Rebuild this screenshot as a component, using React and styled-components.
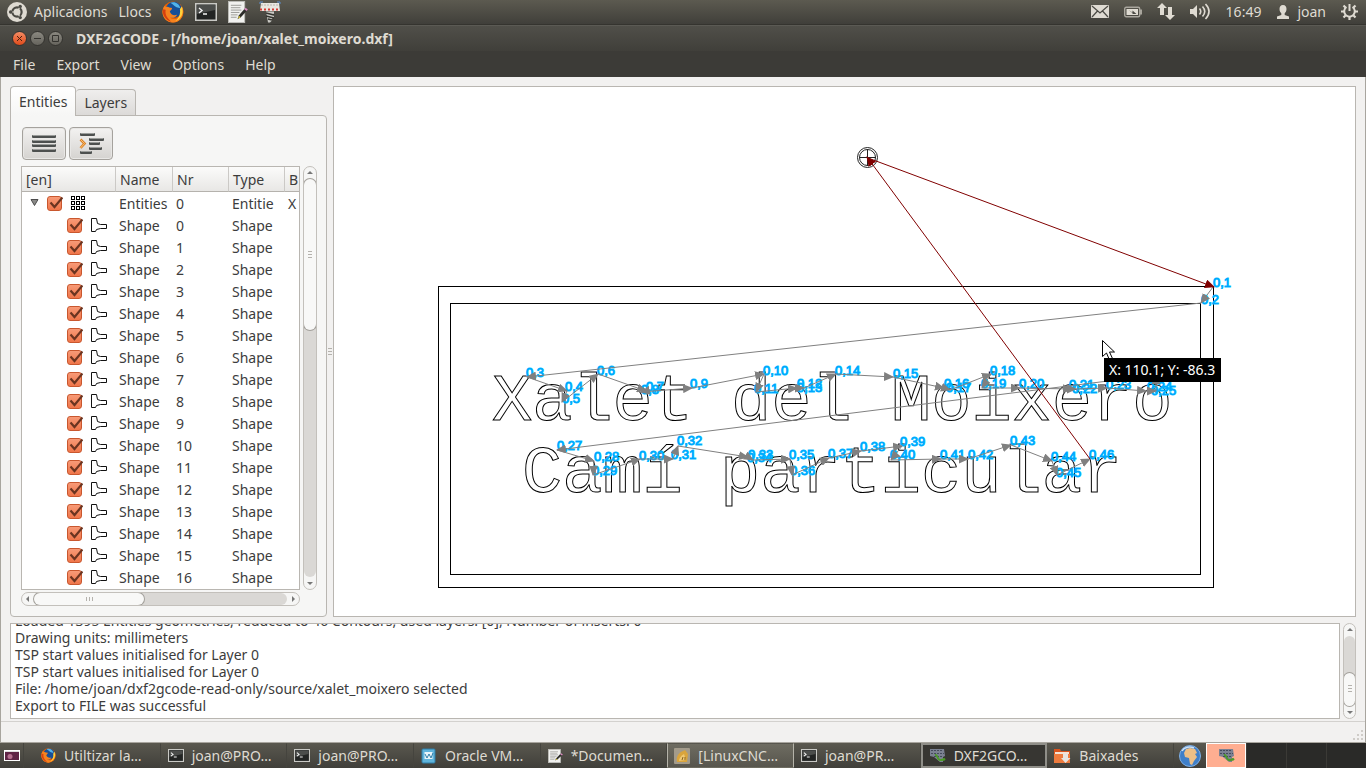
import { useState } from "react";
import styled, { createGlobalStyle, css } from "styled-components";

const color = {
  bar: "#3c3b37",
  barText: "#dfdbd2",
  window: "#f2f1f0",
  pane: "#f6f6f5",
  border: "#b9b6b1",
  text: "#3c3c3c",
  orange: "#f0764a",
  route: "#808080",
  rapid: "#800000",
};

const GlobalStyle = createGlobalStyle`
  * {
    box-sizing: border-box;
  }
  body {
    margin: 0;
    font-family: "Noto Sans", "Open Sans", sans-serif;
    font-size: 14px;
    line-height: 17px;
    color: ${color.text};
    background: ${color.window};
  }
  button,
  input {
    font: inherit;
    color: inherit;
    margin: 0;
  }
`;

const Desktop = styled.div`
  height: 100vh;
  min-height: 480px;
  display: flex;
  flex-direction: column;
  overflow: hidden;
`;

// ---------- top panel ----------
const TopPanel = styled.header`
  height: 25px;
  flex: none;
  display: flex;
  align-items: center;
  justify-content: space-between;
  padding: 0 8px 1px 7px;
  color: ${color.barText};
  background: linear-gradient(#5c5a50, #403f3a);
  border-bottom: 1px solid #35342f;
`;
const PanelGroup = styled.div`
  display: flex;
  align-items: center;
  gap: ${(p) => p.$gap}px;
`;
const PanelButton = styled.button`
  display: flex;
  align-items: center;
  gap: 7px;
  padding: 0;
  border: 0;
  background: none;
  color: inherit;
  white-space: nowrap;
`;

const UbuntuIcon = () => (
  <svg width="20" height="20" viewBox="0 0 20 20">
    <circle cx="10" cy="10" r="10" fill="#dfdbd2" />
    <circle cx="10" cy="10" r="4.6" fill="none" stroke="#4b4a44" strokeWidth="2.2" />
    <g stroke="#dfdbd2" strokeWidth="1.2">
      <path d="M10 10h-8M10 10l4 -7M10 10l4 7" />
    </g>
    <circle cx="10" cy="10" r="3" fill="#dfdbd2" />
    <g fill="#4b4a44">
      <circle cx="3.6" cy="10" r="1.7" />
      <circle cx="13.2" cy="4.4" r="1.7" />
      <circle cx="13.2" cy="15.6" r="1.7" />
    </g>
  </svg>
);

const FirefoxIcon = ({ size }) => (
  <svg width={size} height={size} viewBox="0 0 24 24">
    <circle cx="12" cy="12" r="11.5" fill="#e66000" />
    <circle cx="13" cy="9.5" r="8.8" fill="#174f96" />
    <path d="M9 2c5-2 10 1 11 6l-3-1c-3 0-4-3-8-5z" fill="#53b4e8" />
    <path
      d="M22 6c3 8-1 17-10 17.500C5 23.500 0 18 .600 11 1 8 2 6 3.500 4.500l.500 2c2-.500 3 0 4 .500l3 .500c0 2-2 2.500-2.500 4 1 3 4 5 8 3.500-1 3-5 4-8 3 5 4 13 1 13.500-7z"
      fill="#f5821f"
    />
    <path d="M21.500 6c3 7-1 14-7 16 4-3 6-8 5-13z" fill="#ffd23c" />
    <path d="M1 9c-1 6 3 12 9 13.500-4-4-7-7-6-13z" fill="#d8400f" />
  </svg>
);

const TerminalIcon = ({ width, height }) => (
  <svg width={width} height={height} viewBox="0 0 22 18" preserveAspectRatio="none">
    <rect width="22" height="18" fill="#c9c9c5" />
    <rect x="1.500" y="1.500" width="19" height="15" fill="#222423" />
    <path d="M2 2h18v5L2 11z" fill="#4b4d4b" />
    <path d="M4 5l3 2.500L4 10M8 11h4" fill="none" stroke="#f4f4f4" strokeWidth="1.400" />
  </svg>
);

const EditorIcon = ({ width, height }) => (
  <svg width={width} height={height} viewBox="0 0 21 23" preserveAspectRatio="none">
    <rect x=".500" y=".500" width="17" height="22" fill="#f1f1ef" stroke="#bdbdb8" />
    <path
      d="M3 4.500h11M3 7h10M3 9.500h11M3 12h9M3 14.500h7M3 17h6"
      stroke="#9a9a96"
    />
    <path d="M10 19l1.500-4 6-7 2.500 2-6.500 7z" fill="#2d2d2a" />
    <path d="M10.500 18.500l1-3 1.700 1.500z" fill="#e8d33f" />
    <path d="M17 8.500l1.500-1.500 2.300 2-1.300 1.500z" fill="#d98bc0" />
  </svg>
);

const MillIcon = () => (
  <svg width="22" height="22" viewBox="0 0 22 22">
    <path d="M1 3V1h3M21 3V1h-3" fill="none" stroke="#5d8fd0" />
    <path d="M2 2h18l1 8H1z" fill="#e8e6e0" />
    <path d="M2 4h18" stroke="#b9b6b0" strokeDasharray="2 1" />
    <path d="M1 8.500h20" stroke="#d33b34" strokeWidth="2" strokeDasharray="2 2" />
    <path d="M7 10.500h8v2l-1 1 1 1v2l-2 1v2l-2 2h-2z" fill="#c9c8c3" />
    <path d="M7 12l8 2M7 15l8 2M9 18l4 1" stroke="#353530" strokeWidth="1.300" />
  </svg>
);

const MailIcon = () => (
  <svg width="18" height="13" viewBox="0 0 18 13">
    <rect width="18" height="13" rx="1" fill="#dfdbd2" />
    <path
      d="M1 1l8 7 8-7M1 12l5.500-6M17 12l-5.500-6"
      fill="none"
      stroke="#4b4a44"
      strokeWidth="1.200"
    />
  </svg>
);

const BatteryIcon = () => (
  <svg width="18" height="12" viewBox="0 0 18 12">
    <rect x=".700" y="1.200" width="15" height="9.600" rx="1.500" fill="none" stroke="#a9a69d" strokeWidth="1.400" />
    <rect x="2.500" y="3" width="11.500" height="6" fill="#dfdbd2" />
    <rect x="16" y="3.500" width="2" height="5" fill="#a9a69d" />
    <path d="M4.500 4l4 2.500V4.500l4 3.500H8.500V7z" fill="#4b4a44" />
  </svg>
);

const NetworkIcon = () => (
  <svg width="18" height="17" viewBox="0 0 18 17" fill="#dfdbd2">
    <path d="M5 0l5 5H7v7H3V5H0z" />
    <path d="M13 17l5-5h-3V4h-4v8H8z" />
  </svg>
);

const VolumeIcon = () => (
  <svg width="21" height="17" viewBox="0 0 21 17">
    <path d="M0 6h3l4-4v13l-4-4H0z" fill="#dfdbd2" />
    <path
      d="M9.500 5.500q2.500 3 0 6M12.500 3.500q4.500 5 0 10M15.500 1q7 7.500 0 15"
      fill="none"
      stroke="#dfdbd2"
      strokeWidth="1.600"
    />
  </svg>
);

const UserIcon = () => (
  <svg width="14" height="14" viewBox="0 0 14 14" fill="#dfdbd2">
    <path d="M7 0c2.500 0 3.500 1.700 3.500 4S9.500 7.500 8.700 8.300V10l4.300 1.500V14H1v-2.500L5.300 10V8.300C4.500 7.500 3.500 6.300 3.500 4S4.500 0 7 0z" />
  </svg>
);

const GearIcon = () => (
  <svg width="17" height="17" viewBox="0 0 17 17">
    <g stroke="#dfdbd2" fill="none">
      <path d="M5.500 4a5.300 5.300 0 1 0 6 0" strokeWidth="2" />
      <path d="M8.500 1v7" strokeWidth="2" />
      <path
        d="M0 8.500h3M14 8.500h3M8.500 14v3M2.500 2.500l2 2M14.500 2.500l-2 2M2.500 14.500l2-2M14.500 14.500l-2-2"
        strokeWidth="2.200"
      />
    </g>
  </svg>
);

// ---------- window frame ----------
const TitleBar = styled.div`
  height: 26px;
  flex: none;
  display: flex;
  align-items: center;
  gap: 3px;
  padding: 0 12px 1px;
  color: ${color.barText};
  background: linear-gradient(#504f49, #403f3a);
  border-top: 1px solid #5b5a54;
`;
const WindowButton = styled.button`
  width: 15px;
  height: 15px;
  padding: 0;
  display: grid;
  place-items: center;
  border: 1px solid #34332f;
  border-radius: 50%;
  background: ${(p) =>
    p.$close
      ? "linear-gradient(#f58b63, #df4b1b)"
      : "linear-gradient(#8a8880, #66645d)"};
`;
const WindowTitle = styled.h1`
  margin: 0 0 0 10px;
  font-size: 14px;
  font-weight: 700;
`;
const MenuBar = styled.nav`
  height: 26px;
  flex: none;
  display: flex;
  align-items: center;
  gap: 21px;
  padding: 0 13px;
  color: ${color.barText};
  background: ${color.bar};
`;
const Workspace = styled.main`
  flex: 1;
  min-height: 0;
  display: flex;
  flex-direction: column;
  gap: 6px;
  padding: 9px 9px 2px 9px;
  border: solid #a8a59e;
  border-width: 0 1px;
`;
const Split = styled.div`
  flex: 1;
  min-height: 0;
  display: flex;
`;
const Handle = styled.div`
  width: 6px;
  display: grid;
  place-items: center;
`;

const Grip = () => (
  <svg width="4" height="8" viewBox="0 0 4 8" stroke="#b5b2ad">
    <path d="M0 .5h4M0 3.500h4M0 6.500h4" />
  </svg>
);

// ---------- side panel ----------
const Side = styled.section`
  width: 317px;
  flex: none;
  display: flex;
  flex-direction: column;
`;
const Tabs = styled.div`
  height: 30px;
  flex: none;
  display: flex;
  align-items: flex-end;
  margin-bottom: -1px;
  z-index: 1;
`;
const Tab = styled.button`
  height: ${(p) => (p.$active ? 30 : 26)}px;
  margin-bottom: ${(p) => (p.$active ? 0 : 1)}px;
  padding: 0 8px;
  border: 1px solid ${color.border};
  border-bottom: 0;
  border-radius: 4px 4px 0 0;
  background: ${(p) =>
    p.$active
      ? `linear-gradient(#ffffff, ${color.pane})`
      : "linear-gradient(#efeeed, #dcdad8)"};
  & + & {
    border-left: 0;
  }
`;
const TabPane = styled.div`
  flex: 1;
  min-height: 0;
  display: flex;
  flex-direction: column;
  gap: 6px;
  padding: 11px 9px 10px 10px;
  border: 1px solid ${color.border};
  border-radius: 0 4px 4px 4px;
  background: ${color.pane};
`;
const Tools = styled.div`
  display: flex;
  gap: 3px;
  padding-left: 1px;
`;
const ToolButton = styled.button`
  width: 44px;
  height: 33px;
  padding: 0;
  display: grid;
  place-items: center;
  border: 1px solid #a5a29d;
  border-radius: 4px;
  background: linear-gradient(#f3f2f1, #d5d3d0);
  box-shadow: inset 0 0 0 1px #e8e7e5;
`;
const TreeArea = styled.div`
  flex: 1;
  min-height: 0;
  display: grid;
  grid-template-columns: 1fr 14px;
  grid-template-rows: 1fr 14px;
  gap: 2px 3px;
`;
const TreeFrame = styled.div`
  min-height: 0;
  overflow: hidden;
  border: 1px solid ${color.border};
  background: #fff;
`;
const Tree = styled.table`
  width: 380px;
  table-layout: fixed;
  border-collapse: separate;
  border-spacing: 0;
  th,
  td {
    padding: 0 0 0 3px;
    font-weight: 400;
    text-align: left;
    white-space: nowrap;
    overflow: hidden;
  }
  th {
    height: 25px;
    padding-left: 4px;
    border-right: 1px solid #cbc9c6;
    border-bottom: 1px solid #b5b2ad;
    background: linear-gradient(#fbfbfa, #e8e7e5);
  }
  td {
    height: 22px;
  }
`;
const Node = styled.div`
  display: flex;
  align-items: center;
  gap: 8px;
  padding-left: ${(p) => (p.$level ? 42 : 5)}px;
`;
const CheckWrap = styled.label`
  position: relative;
  display: block;
  width: 16px;
  height: 15px;
  svg {
    position: absolute;
    inset: 0;
    pointer-events: none;
  }
`;
const CheckInput = styled.input`
  appearance: none;
  display: block;
  width: 15px;
  height: 15px;
  border: 1px solid #c9572e;
  border-radius: 3px;
  background: linear-gradient(#f79a77, ${color.orange});
  &:not(:checked) {
    border-color: #aaa;
    background: #fff;
  }
`;

const Check = ({ label }) => {
  const [checked, setChecked] = useState(true);
  return (
    <CheckWrap>
      <CheckInput
        type="checkbox"
        aria-label={label}
        checked={checked}
        onChange={() => setChecked((prev) => !prev)}
      />
      {checked && (
        <svg width="16" height="15" viewBox="0 0 16 15">
          <path d="M3.500 6.500l4 4.500 8-9.500" fill="none" stroke="#6b3420" strokeWidth="2.200" />
        </svg>
      )}
    </CheckWrap>
  );
};

const GridIcon = () => (
  <svg width="15" height="15" viewBox="0 0 15 15" fill="#fff" stroke="#000" shapeRendering="crispEdges">
    {[0, 5, 10].map((y) =>
      [0, 5, 10].map((x) => (
        <rect key={`${x}-${y}`} x={x + 0.5} y={y + 0.5} width="3" height="3" />
      ))
    )}
  </svg>
);
const ShapeIcon = () => (
  <svg width="16" height="15" viewBox="0 0 16 15" fill="none" stroke="#111">
    <path d="M.500 .500h5l1 5 3 1h6v4h-6l-4 1-1 2h-4z" />
  </svg>
);
const Expander = () => (
  <svg width="9" height="8" viewBox="0 0 9 8">
    <path d="M1 .500h7L4.500 6.500z" fill="#8a8a88" stroke="#4c4c4c" />
  </svg>
);
const CollapseIcon = () => (
  <svg width="24" height="19" viewBox="0 0 24 19">
    {[2, 7, 11, 16].map((y) => (
      <g key={y}>
        <rect x="0" y={y - 1} width="24" height="3" rx="1" fill="#4d504f" />
        <path d={`M1 ${y - 0.500}h22`} stroke="#9b9d9b" />
      </g>
    ))}
  </svg>
);
const ExpandIcon = () => (
  <svg width="25" height="22" viewBox="0 0 25 22">
    {[
      [1, 0, 15],
      [10, 5, 15],
      [10, 9, 11],
      [10, 14, 13],
      [1, 18, 12],
    ].map(([x, y, w]) => (
      <g key={y}>
        <rect x={x} y={y} width={w} height="3" rx="1" fill="#4d504f" />
        <path d={`M${x + 1} ${y + 0.500}h${w - 2}`} stroke="#9b9d9b" />
      </g>
    ))}
    <path d="M1.500 6.500l4 4-4 4.500" fill="none" stroke="#d9822b" strokeWidth="2.600" />
    <path d="M1.500 6.500l4 4-4 4.500" fill="none" stroke="#fbc06c" />
  </svg>
);

// ---------- scroll bars ----------
const Bar = styled.div`
  display: flex;
  flex-direction: ${(p) => (p.$vertical ? "column" : "row")};
  border: 1px solid #c3c0bb;
  border-radius: 7px;
  background: #f6f6f5;
  overflow: hidden;
`;
const Arrow = styled.button`
  flex: 0 0 12px;
  padding: 0;
  border: 0;
  background: none;
  display: grid;
  place-items: center;
`;
const Trough = styled.div`
  flex: 1;
  display: flex;
  flex-direction: inherit;
  border-radius: 6px;
  background: #dad8d5;
`;
const Space = styled.div`
  flex: ${(p) => p.$grow} 0 0;
`;
const Thumb = styled.div`
  flex: ${(p) => p.$grow} 0 0;
  display: grid;
  place-items: center;
  border-radius: 6px;
  background: #f8f8f7;
  box-shadow: 0 0 0 1px #a3a09b;
  ${(p) =>
    !p.$vertical &&
    css`
      svg {
        transform: rotate(90deg);
      }
    `}
`;

const arrowPaths = {
  up: "M1 5l3-3 3 3z",
  down: "M1 3l3 3 3-3z",
  left: "M5 1L2 4l3 3z",
  right: "M3 1l3 3-3 3z",
};
const ScrollArrow = ({ dir }) => (
  <Arrow aria-label={dir}>
    <svg width="8" height="8" viewBox="0 0 8 8">
      <path d={arrowPaths[dir]} fill="#777" />
    </svg>
  </Arrow>
);
const ScrollBar = ({ vertical, before, size, after }) => (
  <Bar $vertical={vertical}>
    <ScrollArrow dir={vertical ? "up" : "left"} />
    <Trough>
      <Space $grow={before} />
      <Thumb $grow={size} $vertical={vertical}>
        <Grip />
      </Thumb>
      <Space $grow={after} />
    </Trough>
    <ScrollArrow dir={vertical ? "down" : "right"} />
  </Bar>
);

const shapes = Array.from({ length: 17 }, (_, i) => i);

const EntityTree = () => (
  <Tree>
    <colgroup>
      <col style={{ width: 94 }} />
      <col style={{ width: 57 }} />
      <col style={{ width: 56 }} />
      <col style={{ width: 56 }} />
      <col />
    </colgroup>
    <thead>
      <tr>
        <th>[en]</th>
        <th>Name</th>
        <th>Nr</th>
        <th>Type</th>
        <th>B</th>
      </tr>
    </thead>
    <tbody>
      <tr>
        <td>
          <Node $level={0}>
            <Expander />
            <Check label="Entities 0" />
            <GridIcon />
          </Node>
        </td>
        <td>Entities</td>
        <td>0</td>
        <td>Entitie</td>
        <td>X</td>
      </tr>
      {shapes.map((nr) => (
        <tr key={nr}>
          <td>
            <Node $level={1}>
              <Check label={`Shape ${nr}`} />
              <ShapeIcon />
            </Node>
          </td>
          <td>Shape</td>
          <td>{nr}</td>
          <td>Shape</td>
          <td></td>
        </tr>
      ))}
    </tbody>
  </Tree>
);

// ---------- drawing ----------
const Canvas = styled.section`
  position: relative;
  flex: 1;
  min-width: 0;
  overflow: hidden;
  border: 1px solid ${color.border};
  background: #fff;
`;
const Drawing = styled.svg`
  display: block;
  width: 100%;
  height: 100%;
`;
const Engraving = styled.text`
  font-family: "Liberation Mono", monospace;
  font-size: 67px;
  fill: none;
  stroke: #000;
`;
const RouteLabel = styled.text`
  font-family: "Liberation Sans", sans-serif;
  font-size: 13px;
  fill: #00a4ff;
  stroke: #00c0ff;
  stroke-width: 1px;
  paint-order: stroke;
`;
const Coordinates = styled.output`
  position: absolute;
  left: 770px;
  top: 271px;
  padding: 3px 6px 4px 5px;
  color: #fff;
  background: #000;
  white-space: nowrap;
`;

// [label, arrow tip x, y, text x, baseline]
const stops = [
  ["0,1", 1213, 287, 1213, 287],
  ["0,2", 1201, 303, 1201, 304],
  ["0,3", 527, 377, 526, 377],
  ["0,4", 567, 391, 565, 391],
  ["0,5", 562, 402, 562, 403],
  ["0,6", 598, 374, 597, 375],
  ["0,7", 646, 391, 646, 391],
  ["0,8", 641, 392, 641, 394],
  ["0,9", 692, 388, 690, 388],
  ["0,10", 764, 374, 763, 375],
  ["0,11", 756, 392, 754, 393],
  ["0,12", 797, 388, 797, 388],
  ["0,13", 804, 388, 797, 392],
  ["0,14", 836, 374, 835, 375],
  ["0,15", 893, 377, 893, 378],
  ["0,16", 944, 388, 944, 388],
  ["0,17", 950, 390, 946, 392],
  ["0,18", 991, 374, 990, 375],
  ["0,19", 982, 388, 981, 388],
  ["0,20", 1020, 388, 1019, 388],
  ["0,21", 1072, 389, 1069, 389],
  ["0,22", 1076, 389, 1072, 393],
  ["0,23", 1107, 388, 1106, 389],
  ["0,24", 1146, 391, 1147, 391],
  ["0,25", 1156, 391, 1151, 395],
  ["0,26", 1156, 375, 1156, 375],
  ["0,27", 557, 450, 557, 450],
  ["0,28", 594, 461, 594, 461],
  ["0,29", 593, 475, 592, 475],
  ["0,30", 640, 459, 639, 460],
  ["0,31", 673, 459, 671, 459],
  ["0,32", 678, 446, 677, 445],
  ["0,33", 748, 457, 748, 459],
  ["0,34", 753, 460, 747, 462],
  ["0,35", 790, 459, 789, 459],
  ["0,36", 792, 475, 790, 475],
  ["0,37", 829, 458, 828, 458],
  ["0,38", 861, 451, 860, 451],
  ["0,39", 902, 446, 900, 446],
  ["0,40", 891, 460, 890, 459],
  ["0,41", 941, 459, 940, 459],
  ["0,42", 968, 459, 968, 459],
  ["0,43", 1011, 445, 1010, 445],
  ["0,44", 1052, 461, 1051, 461],
  ["0,45", 1057, 475, 1056, 477],
  ["0,46", 1090, 459, 1089, 459],
];

const words = [
  ["Xalet", 492, 420],
  ["del", 731, 420],
  ["Moixeró", 891, 420],
  ["Camí", 522, 492],
  ["particular", 720, 492],
];

const Plot = () => (
  <Drawing>
    <defs>
      {["route", "rapid"].map((id) => (
        <marker
          key={id}
          id={id}
          viewBox="0 0 10 9"
          refX="9"
          refY="4.5"
          markerWidth="10"
          markerHeight="9"
          markerUnits="userSpaceOnUse"
          orient="auto"
        >
          <path d="M0 0l10 4.500-10 4.500z" fill={color[id]} />
        </marker>
      ))}
    </defs>
    <g transform="translate(-334 -87)">
      <g fill="none" stroke="#000" shapeRendering="crispEdges">
        <rect x="438.5" y="286.5" width="775" height="301" />
        <rect x="450.5" y="303.5" width="750" height="271" />
      </g>
      {words.map(([word, x, y]) => (
        <Engraving key={word} x={x} y={y}>
          {word}
        </Engraving>
      ))}
      {stops.map(([label, , , x, y]) => (
        <RouteLabel key={label} x={x} y={y}>
          {label}
        </RouteLabel>
      ))}
      <g stroke={color.route}>
        {stops.slice(1).map(([label, x, y], i) => (
          <line
            key={label}
            x1={stops[i][1]}
            y1={stops[i][2]}
            x2={x}
            y2={y}
            markerEnd="url(#route)"
          />
        ))}
      </g>
      <g fill="none" stroke="#222">
        <circle cx="867.5" cy="157.5" r="10" />
        <circle cx="867.5" cy="157.5" r="8" />
        <path d="M867.5 149v17M859 157.500h17" />
      </g>
      <g stroke={color.rapid}>
        <line x1="868" y1="158" x2="1214" y2="287" markerEnd="url(#rapid)" />
        <line x1="1090" y1="459" x2="867" y2="157" markerEnd="url(#rapid)" />
      </g>
      <path
        d="M1102.500 340.500v16l4-3.500 3 7 3-1.500-3-6.500h5z"
        fill="#fff"
        stroke="#000"
      />
    </g>
  </Drawing>
);

// ---------- log ----------
const LogRow = styled.div`
  height: 96px;
  flex: none;
  display: flex;
  gap: 3px;
`;
const Log = styled.div`
  flex: 1;
  min-width: 0;
  display: flex;
  flex-direction: column;
  justify-content: flex-end;
  overflow: hidden;
  padding: 0 4px 4px;
  border: 1px solid ${color.border};
  background: #fff;
  p {
    margin: 0;
    flex: none;
    white-space: nowrap;
  }
`;
const LogScroll = styled.div`
  width: 13px;
  display: grid;
`;
const StatusBar = styled.footer`
  height: 22px;
  flex: none;
  display: flex;
  align-items: flex-end;
  justify-content: flex-end;
  padding: 2px;
  border: solid #a8a59e;
  border-width: 0 1px 1px;
  box-shadow: inset 0 1px 0 #d3d1ce;
`;

const logLines = [
  "Loaded 1395 Entities geometries, reduced to 46 Contours, used layers: [0], Number of inserts: 0",
  "Drawing units: millimeters",
  "TSP start values initialised for Layer 0",
  "TSP start values initialised for Layer 0",
  "File: /home/joan/dxf2gcode-read-only/source/xalet_moixero selected",
  "Export to FILE was successful",
];

// ---------- task bar ----------
const TaskBar = styled.div`
  height: 25px;
  flex: none;
  display: flex;
  color: ${color.barText};
  background: linear-gradient(#5a584f, #403f3a);
`;
const ShowDesktop = styled.button`
  width: 24px;
  padding: 0;
  border: 0;
  border-right: 1px solid #45443e;
  background: none;
  display: grid;
  place-items: center;
`;
const Tasks = styled.div`
  flex: 1;
  min-width: 0;
  display: grid;
  grid-template-columns: repeat(9, 1fr);
  margin-left: 10px;
`;
const Task = styled.button`
  min-width: 0;
  display: flex;
  align-items: center;
  gap: 8px;
  padding: 0 6px;
  border: 1px solid transparent;
  border-right-color: #45443e;
  background: none;
  white-space: nowrap;
  overflow: hidden;
  ${(p) =>
    p.$state === "urgent" &&
    css`
      border-color: transparent #b5b3a9;
      background: linear-gradient(#6e6c61, #57554d);
    `}
  ${(p) =>
    p.$state === "active" &&
    css`
      border: 2px solid #8f8e88;
      background: #373632;
    `}
`;
const Globe = styled.div`
  width: 32px;
  display: grid;
  place-items: center;
`;
const Switcher = styled.div`
  width: 160px;
  display: grid;
  grid-template-columns: repeat(4, 1fr);
`;
const Cell = styled.button`
  padding: 0;
  display: grid;
  place-items: center;
  border: 0;
  border-left: 1px solid #3b3a36;
  background: #2a2a28;
  ${(p) =>
    p.$current &&
    css`
      border: 1px solid #fff;
      background: #ffae91;
    `}
`;

const BoxIcon = () => (
  <svg width="16" height="16" viewBox="0 0 16 16">
    <rect x="1" y="1" width="13" height="14" rx="1" fill="#5fb4dc" stroke="#2f7ea8" />
    <rect x="3.500" y="4" width="8" height="7" fill="#e7f4fa" />
    <path d="M4 6l2 4 2-4 2 4 2-5" fill="none" stroke="#2f7ea8" />
  </svg>
);
const CncIcon = () => (
  <svg width="16" height="16" viewBox="0 0 16 16">
    <rect width="16" height="16" rx="1" fill="#a39b8b" />
    <path d="M3 14c-1-5 1-8 4-10l4-2 3 4-1 8z" fill="#d9a43c" />
    <path d="M5 13c0-3 2-5 5-7l2 6z" fill="#efc873" />
    <path d="M8 12l1-3M11 12v-3" stroke="#8a6420" />
  </svg>
);
const WormIcon = () => (
  <svg width="17" height="15" viewBox="0 0 17 15">
    <path d="M1 1h14l1 7-2 1v5h-3L5 9 1 8z" fill="#7b8192" />
    <path d="M2 2.500h12M2 5.500h13M5 8.500h8" stroke="#454b5c" strokeDasharray="2 1" />
    <path d="M6 7c3-1 2 5 5 5h2l2-1 1 1" fill="none" stroke="#4c9a2a" strokeWidth="2" />
  </svg>
);
const FolderIcon = () => (
  <svg width="17" height="14" viewBox="0 0 17 14">
    <path d="M0 0h6l1 2h9v12H0z" fill="#d9541e" />
    <rect x="1" y="3" width="14" height="3" fill="#f3e3d6" />
    <path d="M0 5h16v9H0z" fill="#ee7b3e" />
    <path d="M9 5h5v4h2.500L11.500 14 7 9h2z" fill="#e6e4e0" />
  </svg>
);
const GlobeIcon = () => (
  <svg width="22" height="22" viewBox="0 0 22 22">
    <circle cx="11" cy="11" r="10.500" fill="#3f7fc9" stroke="#7fb0e6" />
    <path d="M7 4l4-1 5 1 2 4-2 1 2 3-3 4-2 4-2-1-1-6-4-1-1-4z" fill="#edbf86" />
    <path d="M3 6c2-4 8-5 12-3" fill="none" stroke="#cfe3f7" strokeWidth="1.500" />
  </svg>
);
const DesktopIcon = () => (
  <svg width="16" height="11" viewBox="0 0 16 11">
    <rect x=".500" y=".500" width="15" height="10" fill="#5f2445" stroke="#fff" />
    <path d="M1 1h14v1H1z" fill="#ddd" />
    <circle cx="6" cy="6.500" r="2.500" fill="#b5708f" />
  </svg>
);

const tasks = [
  { icon: <FirefoxIcon size={15} />, title: "Utiltizar la…" },
  { icon: <TerminalIcon width={16} height={13} />, title: "joan@PRO…" },
  { icon: <TerminalIcon width={16} height={13} />, title: "joan@PRO…" },
  { icon: <BoxIcon />, title: "Oracle VM…" },
  { icon: <EditorIcon width={15} height={14} />, title: "*Documen…" },
  { icon: <CncIcon />, title: "[LinuxCNC…", state: "urgent" },
  { icon: <TerminalIcon width={16} height={13} />, title: "joan@PR…" },
  { icon: <WormIcon />, title: "DXF2GCO…", state: "active" },
  { icon: <FolderIcon />, title: "Baixades" },
];

const App = () => {
  const [tab, setTab] = useState("Entities");
  return (
    <Desktop>
      <GlobalStyle />
      <TopPanel>
        <PanelGroup $gap={11}>
          <PanelButton>
            <UbuntuIcon />
            Aplicacions
          </PanelButton>
          <PanelButton>Llocs</PanelButton>
          <PanelButton aria-label="Firefox">
            <FirefoxIcon size={22} />
          </PanelButton>
          <PanelButton aria-label="Terminal">
            <TerminalIcon width={22} height={18} />
          </PanelButton>
          <PanelButton aria-label="Editor">
            <EditorIcon width={20} height={22} />
          </PanelButton>
          <PanelButton aria-label="CNC">
            <MillIcon />
          </PanelButton>
        </PanelGroup>
        <PanelGroup $gap={15}>
          <MailIcon />
          <BatteryIcon />
          <NetworkIcon />
          <VolumeIcon />
          <span>16:49</span>
          <PanelButton>
            <UserIcon />
            joan
          </PanelButton>
          <GearIcon />
        </PanelGroup>
      </TopPanel>

      <TitleBar>
        <WindowButton $close aria-label="Close">
          <svg width="7" height="7" viewBox="0 0 7 7" stroke="#4a2010">
            <path d="M1 1l5 5M6 1l-5 5" />
          </svg>
        </WindowButton>
        <WindowButton aria-label="Minimize">
          <svg width="7" height="7" viewBox="0 0 7 7" stroke="#34332f">
            <path d="M0 3.500h7" />
          </svg>
        </WindowButton>
        <WindowButton aria-label="Maximize">
          <svg width="7" height="7" viewBox="0 0 7 7" fill="none" stroke="#34332f">
            <path d="M.500 .500h6v6h-6z" />
          </svg>
        </WindowButton>
        <WindowTitle>DXF2GCODE - [/home/joan/xalet_moixero.dxf]</WindowTitle>
      </TitleBar>
      <MenuBar>
        {["File", "Export", "View", "Options", "Help"].map((item) => (
          <PanelButton key={item}>{item}</PanelButton>
        ))}
      </MenuBar>

      <Workspace>
        <Split>
          <Side>
            <Tabs>
              {["Entities", "Layers"].map((name) => (
                <Tab key={name} $active={tab === name} onClick={() => setTab(name)}>
                  {name}
                </Tab>
              ))}
            </Tabs>
            <TabPane>
              <Tools>
                <ToolButton aria-label="Collapse all">
                  <CollapseIcon />
                </ToolButton>
                <ToolButton aria-label="Expand all">
                  <ExpandIcon />
                </ToolButton>
              </Tools>
              <TreeArea>
                <TreeFrame>
                  <EntityTree />
                </TreeFrame>
                <ScrollBar vertical before={0} size={152} after={248} />
                <ScrollBar before={0} size={110} after={144} />
              </TreeArea>
            </TabPane>
          </Side>
          <Handle>
            <Grip />
          </Handle>
          <Canvas>
            <Plot />
            <Coordinates>X: 110.1; Y: -86.3</Coordinates>
          </Canvas>
        </Split>
        <LogRow>
          <Log>
            {logLines.map((line, i) => (
              <p key={i}>{line}</p>
            ))}
          </Log>
          <LogScroll>
            <ScrollBar vertical before={36} size={33} after={0} />
          </LogScroll>
        </LogRow>
      </Workspace>
      <StatusBar>
        <svg width="10" height="10" viewBox="0 0 10 10" fill="#cfccc8">
          <path d="M8 0h2v2h-2zM8 4h2v2h-2zM4 4h2v2h-2zM8 8h2v2h-2zM4 8h2v2h-2zM0 8h2v2h-2z" />
        </svg>
      </StatusBar>

      <TaskBar>
        <ShowDesktop aria-label="Show desktop">
          <DesktopIcon />
        </ShowDesktop>
        <Tasks>
          {tasks.map(({ icon, title, state }, i) => (
            <Task key={i} $state={state}>
              {icon}
              {title}
            </Task>
          ))}
        </Tasks>
        <Globe>
          <GlobeIcon />
        </Globe>
        <Switcher>
          <Cell $current aria-label="Workspace 1">
            <WormIcon />
          </Cell>
          <Cell aria-label="Workspace 2" />
          <Cell aria-label="Workspace 3" />
          <Cell aria-label="Workspace 4" />
        </Switcher>
      </TaskBar>
    </Desktop>
  );
};

export default App;
